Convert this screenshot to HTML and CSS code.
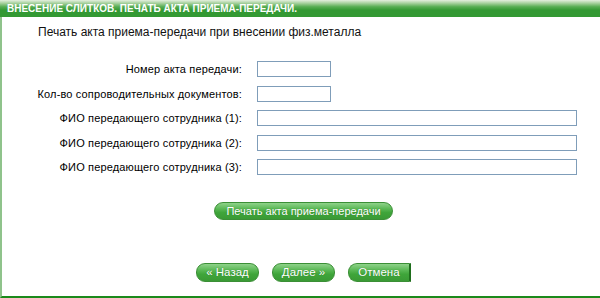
FILE: index.html
```html
<!DOCTYPE html>
<html>
<head>
	<title>Внесение слитков</title>
	<meta http-equiv="content-type" content="text/html; charset=utf-8" />
	<link rel="stylesheet" href="styles.css">
</head>
<body>
	<div class="head">ВНЕСЕНИЕ СЛИТКОВ. ПЕЧАТЬ АКТА ПРИЕМА-ПЕРЕДАЧИ.</div>

	<div class="page">
		<p class="subtitle">Печать акта приема-передачи при внесении физ.металла</p>

		<div class="form">
			<label>Номер акта передачи:</label>
			<input class="short">
			<label>Кол-во сопроводительных документов:</label>
			<input class="short">
			<label>ФИО передающего сотрудника (1):</label>
			<input class="long">
			<label>ФИО передающего сотрудника (2):</label>
			<input class="long">
			<label>ФИО передающего сотрудника (3):</label>
			<input class="long">
		</div>

		<div class="actions">
			<button class="btn wide">Печать акта приема-передачи</button>
		</div>

		<div class="nav">
			<button class="btn">« Назад</button>
			<button class="btn">Далее »</button>
			<button class="btn cut">Отмена</button>
		</div>
	</div>
</body>
</html>
```

FILE: styles.css
```css
html, body {
	margin:0;
	padding:0;
	background:#fff;
}

body {
	font-family:"Liberation Sans", Arial, sans-serif;
	font-size:11px;
	color:#000;
	width:600px;
	height:298px;
	overflow:hidden;
}

.head {
	height:17px;
	line-height:18px;
	padding-left:7px;
	background:linear-gradient(to bottom, #e4efdf 0%, #a9d2a0 18%, #56ad52 40%, #339933 60%, #339933 100%);
	color:#fff;
	font-weight:bold;
	font-size:10px;
	white-space:nowrap;
}

.page {
	height:279px;
	border-left:2px solid #8fc38b;
	border-bottom:2px solid #1b8a1b;
}

.subtitle {
	margin:0;
	padding:7px 0 0 36px;
	height:16px;
	line-height:16px;
	font-size:12px;
	color:#111;
}

.form {
	display:grid;
	grid-template-columns:240px 320px;
	column-gap:15px;
	row-gap:8.5px;
	margin-top:21px;
	align-items:center;
}

.form label {
	text-align:right;
	white-space:nowrap;
	line-height:16px;
	letter-spacing:0.15px;
}

.form input {
	box-sizing:border-box;
	height:16px;
	margin:0;
	padding:0 2px;
	border:1px solid #7f9db9;
	font:11px "Liberation Sans", Arial, sans-serif;
}

.short {
	width:74px;
}

.long {
	width:320px;
}

.actions, .nav {
	display:flex;
	justify-content:center;
	padding-left:5px;
}

.actions {
	margin-top:27px;
}

.nav {
	margin-top:43px;
	gap:13px;
}

.btn {
	box-sizing:border-box;
	height:19px;
	width:63px;
	padding:0 0 1px 0;
	border:1px solid #3b8f36;
	border-radius:9px;
	background:linear-gradient(to bottom, #8fd28a 0%, #5cb957 35%, #3fa53a 60%, #3a9a35 100%);
	color:#fff;
	font:11.5px "Liberation Sans", Arial, sans-serif;
	text-shadow:0 0 1px #2f7d2b;
}

.wide {
	width:179px;
	height:18px;
	font-size:11px;
}

.cut {
	border-right:2px solid #1f6e1c;
	border-radius:9px 0 0 9px;
}
```
